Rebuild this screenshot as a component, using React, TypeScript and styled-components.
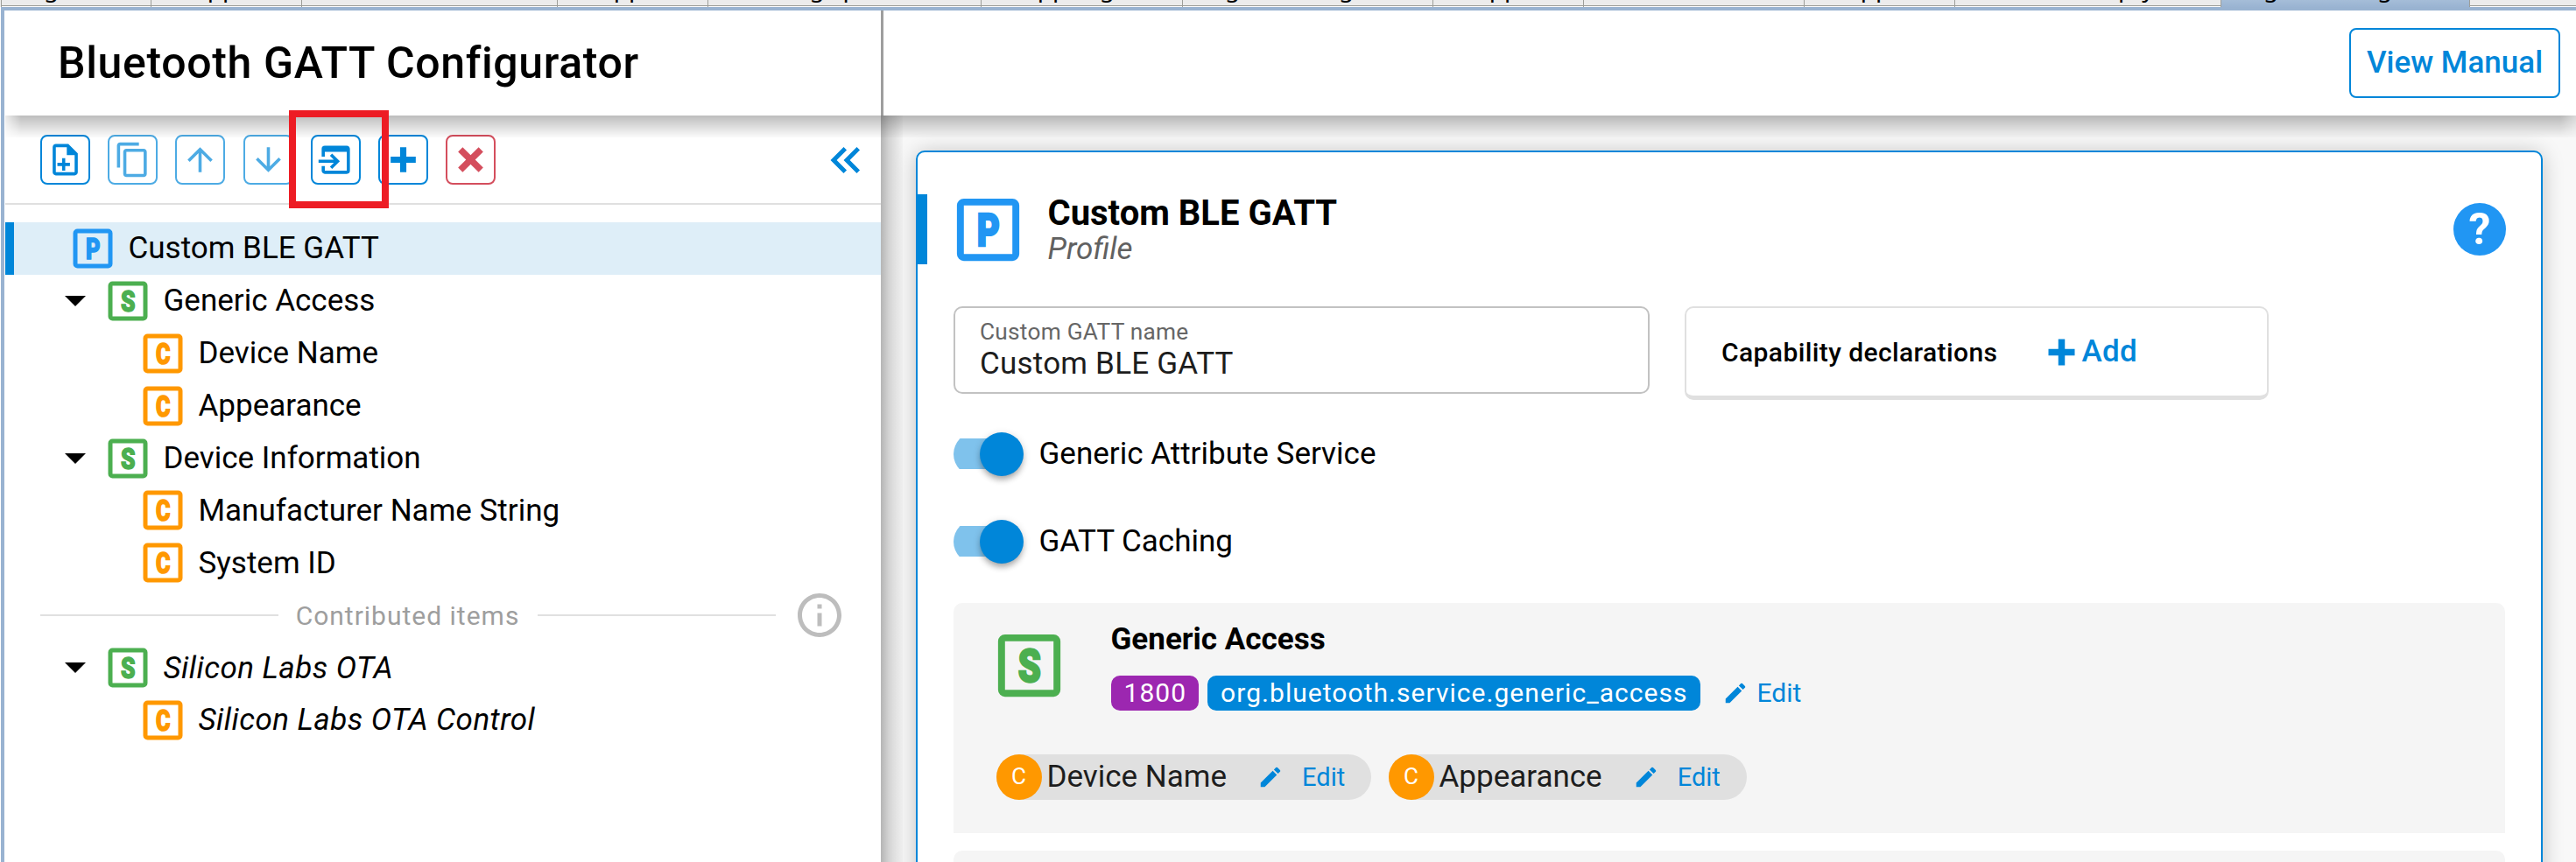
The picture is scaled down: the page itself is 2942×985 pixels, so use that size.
import React from "react";
import styled, { createGlobalStyle } from "styled-components";
import { MdContentCopy, MdArrowUpward, MdArrowDownward, MdEdit, MdInfoOutline } from "react-icons/md";

const BLUE = "#0086d9";

const GlobalStyle = createGlobalStyle`
  *, *::before, *::after { box-sizing: border-box; }
  body { margin: 0; background: #fff; overflow: hidden; }
`;

const Window = styled.div`
  width: 2942px;
  height: 985px;
  overflow: hidden;
  display: flex;
  flex-direction: column;
  background: #fff;
  color: #000;
  font: 400 35px/61px Roboto, "Liberation Sans", sans-serif;
`;

/* Editor tabs above the page */
const TabStrip = styled.div`
  display: flex;
  flex: none;
  height: 8px;
  padding-left: 1px;
  background: #ececec;
`;

const Tab = styled.div<{ $width: number; $active?: boolean }>`
  flex: none;
  width: ${(p) => p.$width}px;
  height: 8px;
  overflow: hidden;
  padding-left: 48px;
  border-left: 1px solid #9d9e99;
  background: ${(p) =>
    p.$active
      ? "linear-gradient(#a5bdd8, #9ab4d2)"
      : "linear-gradient(#ececec 6px, #9d9e99 6px, #9d9e99 7px, #fbfbfb 7px)"};
`;

const TabLabel = styled.div`
  margin-top: -25.5px;
  font: 28px/20px "Noto Sans", sans-serif;
  white-space: nowrap;
`;

const Frame = styled.div`
  flex: 1;
  min-height: 0;
  display: flex;
  flex-direction: column;
  border-top: 4px solid #99b3d1;
  border-left: 4px solid #99b3d1;
  margin-left: 1px;
  padding-left: 1px;
`;

const Header = styled.header`
  flex: none;
  height: 120px;
  display: flex;
`;

const HeaderTitle = styled.h1`
  width: 1003px;
  margin: 0;
  padding-left: 60px;
  border-right: 3px solid #9e9e9e;
  font-size: 50px;
  font-weight: 500;
  line-height: 120px;
  letter-spacing: 0.64px;
`;

const HeaderActions = styled.div`
  flex: 1;
  display: flex;
  justify-content: flex-end;
  align-items: center;
  padding-right: 18px;
`;

const ManualButton = styled.button`
  width: 241px;
  height: 80px;
  padding: 0;
  border: 2px solid ${BLUE};
  border-radius: 8px;
  background: #fff;
  color: ${BLUE};
  font: 500 35px/76px Roboto, sans-serif;
`;

const Main = styled.div`
  position: relative;
  flex: 1;
  min-height: 0;
  display: flex;
`;

const HeaderShade = styled.div`
  position: absolute;
  top: 0;
  left: 0;
  right: 0;
  height: 25px;
  pointer-events: none;
  background: linear-gradient(rgba(0, 0, 0, 0.26), rgba(0, 0, 0, 0.16) 10px, rgba(0, 0, 0, 0.07) 19px, rgba(0, 0, 0, 0.02));
  mask-image: linear-gradient(90deg, rgba(0, 0, 0, 0.3), #000 18px, #000 calc(100% - 18px), rgba(0, 0, 0, 0.5));
`;

const Sidebar = styled.aside`
  flex: none;
  width: 1000px;
  display: flex;
  flex-direction: column;
`;

const Toolbar = styled.div`
  position: relative;
  height: 102px;
  padding: 22px 10px 0 40px;
  display: flex;
  gap: 20.2px;
  border-bottom: 2px solid #e0e0e0;
`;

const ToolButton = styled.button<{ $color?: string }>`
  flex: none;
  width: 57px;
  height: 57px;
  padding: 0;
  display: flex;
  align-items: center;
  justify-content: center;
  border: 2px solid currentColor;
  border-radius: 8px;
  background: transparent;
  color: ${(p) => p.$color ?? BLUE};
  svg { flex: none; }
`;

const CollapseButton = styled(ToolButton)`
  width: 60px;
  margin-left: auto;
  border: 0;
`;

const Marker = styled.div`
  position: absolute;
  left: 324px;
  top: -6px;
  width: 114px;
  height: 112px;
  border: 8px solid #ed1c24;
  z-index: 2;
`;

const Tree = styled.div`
  padding-top: 20px;
  display: flex;
  flex-direction: column;
`;

const TreeRow = styled.div<{ $level: number; $selected?: boolean; $italic?: boolean }>`
  height: 59.9px;
  display: flex;
  align-items: center;
  gap: 10.5px;
  padding-left: ${(p) => [60, 68, 150][p.$level]}px;
  border-left: ${(p) => (p.$selected ? `10px solid ${BLUE}` : "0")};
  background: ${(p) => (p.$selected ? "#deeef8" : "none")};
  font-style: ${(p) => (p.$italic ? "italic" : "normal")};
  letter-spacing: ${(p) => (p.$italic ? "0.45px" : "0")};
  white-space: nowrap;
  svg { flex: none; }
`;

const Caret = styled.span`
  width: 0;
  height: 0;
  margin-right: 7.5px;
  border: 12px solid transparent;
  border-top-color: #000;
  border-bottom: 0;
`;

const SectionRow = styled.div`
  height: 59.9px;
  display: flex;
  align-items: center;
  padding: 0 40px;
  color: #9e9e9e;
  font-size: 30px;
  letter-spacing: 1px;
  white-space: nowrap;
  svg { flex: none; margin-left: 20px; }
`;

const Rule = styled.span`
  flex: 1;
  height: 2px;
  background: #e0e0e0;
`;

const SectionLabel = styled.span`
  padding: 0 21px 0 20px;
`;

const Pane = styled.main`
  position: relative;
  flex: 1;
  min-width: 0;
  padding: 40px 38px 0 40px;
  background: #f8f8f8;
  overflow: hidden;
`;

const PaneShade = styled.div`
  position: absolute;
  top: 0;
  left: 0;
  bottom: 0;
  width: 25px;
  background: linear-gradient(90deg, rgba(0, 0, 0, 0.27), rgba(0, 0, 0, 0.15) 9px, rgba(0, 0, 0, 0.02));
`;

const Card = styled.section`
  position: relative;
  height: 900px;
  padding-top: 48px;
  border: 2px solid ${BLUE};
  border-radius: 10px;
  background: #fff;
  box-shadow: 0 2px 24px rgba(0, 0, 0, 0.22);
`;

const CardHeader = styled.div`
  height: 80px;
  display: flex;
  align-items: center;
  padding-right: 40px;
  border-left: 11px solid ${BLUE};
  svg { flex: none; }
`;

const CardHeading = styled.div`
  flex: 1;
  height: 80px;
  margin-left: 21px;
`;

const CardTitle = styled.h2`
  margin: 0;
  font-size: 40px;
  font-weight: 700;
  line-height: 43px;
`;

const CardSubtitle = styled.div`
  font-size: 35px;
  font-style: italic;
  line-height: 40px;
  color: #616161;
`;

const HelpButton = styled.button`
  width: 60px;
  height: 60px;
  padding: 0;
  border: 0;
  border-radius: 50%;
  background: #2196f3;
  color: #fff;
  font: 700 50px/60px Roboto, sans-serif;
`;

const CardBody = styled.div`
  padding: 48px 41px 0;
`;

const FieldRow = styled.div`
  display: flex;
  align-items: flex-start;
  gap: 40px;
  height: 107px;
`;

const Field = styled.label`
  width: 795px;
  height: 100px;
  padding: 10px 28px;
  border: 2px solid #c2c2c2;
  border-radius: 10px;
`;

const FieldLabel = styled.div`
  font-size: 26.25px;
  line-height: 34px;
  letter-spacing: 0.25px;
  color: #666;
`;

const FieldValue = styled.div`
  line-height: 40px;
  letter-spacing: 0.22px;
  color: #1d1d1d;
`;

const Capabilities = styled.div`
  width: 667px;
  height: 107px;
  display: flex;
  align-items: center;
  padding: 0 0 0 40px;
  border: 2px solid #e0e0e0;
  border-bottom-width: 5px;
  border-radius: 10px;
  font-size: 30px;
  font-weight: 500;
  letter-spacing: 0.4px;
`;

const AddButton = styled.button`
  display: flex;
  align-items: center;
  margin-left: 51px;
  padding: 0;
  border: 0;
  background: none;
  color: ${BLUE};
  font: 500 35px/50px Roboto, sans-serif;
  letter-spacing: 0.3px;
`;

const Toggles = styled.div`
  display: flex;
  flex-direction: column;
  gap: 50px;
  padding: 37px 0 45px;
`;

const ToggleRow = styled.div`
  height: 50px;
  display: flex;
  align-items: center;
  gap: 17.5px;
  line-height: 48px;
`;

const Track = styled.span`
  width: 80px;
  height: 50px;
  display: flex;
  justify-content: flex-end;
  background: linear-gradient(#7fc2ec, #7fc2ec) 0 7px / 70px 35px no-repeat;
  border-radius: 25px;
`;

const Thumb = styled.span`
  width: 50px;
  height: 50px;
  border-radius: 50%;
  background: ${BLUE};
  box-shadow: 0 6px 7px -2px rgba(0, 0, 0, 0.25), 0 2px 8px rgba(0, 0, 0, 0.18);
`;

const Service = styled.section`
  height: 263px;
  margin-bottom: 20px;
  padding: 20px 0 0 38.5px;
  border-radius: 10px 10px 0 0;
  background: #f5f5f5;
`;

const ServiceHead = styled.div`
  display: flex;
  gap: 46px;
  height: 153px;
  > svg { margin-top: 4px; }
`;

const ServiceTitle = styled.h3`
  margin: 0 0 20px;
  font-size: 35px;
  font-weight: 700;
  line-height: 43px;
`;

const BadgeRow = styled.div`
  display: flex;
  align-items: center;
  gap: 10px;
`;

const Badge = styled.span<{ $color: string }>`
  height: 40px;
  padding: 0 14px 0 15px;
  border-radius: 10px;
  background: ${(p) => p.$color};
  color: #fff;
  font-size: 30px;
  line-height: 40px;
  letter-spacing: 1.04px;
`;

const EditLink = styled.button<{ $gap: number; $offset: number; $size: number }>`
  display: flex;
  align-items: center;
  gap: ${(p) => p.$gap}px;
  margin: 0 0 0 ${(p) => p.$offset}px;
  padding: 0;
  border: 0;
  background: none;
  color: ${BLUE};
  font: 400 ${(p) => p.$size}px/38px Roboto, sans-serif;
`;

const ChipRow = styled.div`
  display: flex;
  gap: 20px;
  margin-left: 10px;
`;

const Chip = styled.div<{ $width: number }>`
  width: ${(p) => p.$width}px;
  height: 52px;
  display: flex;
  align-items: center;
  border-radius: 26px;
  background: #e0e0e0;
  color: #1d1d1d;
  line-height: 52px;
  white-space: nowrap;
`;

const Avatar = styled.span`
  width: 52px;
  height: 52px;
  margin-right: 6px;
  border-radius: 50%;
  background: #ff9800;
  color: #fff;
  font-size: 26px;
  line-height: 50px;
  text-align: center;
`;

const letterColors = { P: "#2196f3", S: "#4caf50", C: "#ff9800" };

function LetterBox({ letter, size }: { letter: "P" | "S" | "C"; size: number }) {
  const color = letterColors[letter];
  return (
    <svg width={size} height={size} viewBox="0 0 24 24">
      <rect x="4" y="4" width="16" height="16" rx="1" fill="none" stroke={color} strokeWidth="2" />
      <text
        x="8.8"
        y="16.7"
        fill={color}
        stroke={color}
        strokeWidth="0.6"
        fontFamily="Roboto, sans-serif"
        fontStyle="normal"
        fontWeight="900"
        fontSize="13.3"
        letterSpacing="0"
        textLength="6.6"
        lengthAdjust="spacingAndGlyphs"
      >
        {letter}
      </text>
    </svg>
  );
}

const shapes = {
  filePlus:
    "M14 2H6C4.89 2 4 2.89 4 4V20C4 21.11 4.89 22 6 22H18C19.11 22 20 21.11 20 20V8L14 2M18 20H6V4H13V9H18V20M10 11H12V14H15V16H12V19H10V16H7V14H10Z",
  importApp:
    "M1,12H10.76L8.26,9.5L9.67,8.08L14.59,13L9.67,17.92L8.26,16.5L10.76,14H1V12M19,3C20.11,3 21,3.89 21,5V19A2,2 0 0,1 19,21H5C3.89,21 3,20.1 3,19V16H5V19H19V7H5V10H3V5A2,2 0 0,1 5,3H19Z",
  plus: "M20 14H14V20H10V14H4V10H10V4H14V10H20V14Z",
  close:
    "M20 6.91L17.09 4L12 9.09L6.91 4L4 6.91L9.09 12L4 17.09L6.91 20L12 14.91L17.09 20L20 17.09L14.91 12L20 6.91Z",
  collapse:
    "M18.41,7.41L17,6L11,12L17,18L18.41,16.59L13.83,12L18.41,7.41M12.41,7.41L11,6L5,12L11,18L12.41,16.59L7.83,12L12.41,7.41Z",
};

function Shape({ name, size = 43 }: { name: keyof typeof shapes; size?: number }) {
  return (
    <svg width={size} height={size} viewBox="0 0 24 24" fill="currentColor">
      <path d={shapes[name]} />
    </svg>
  );
}

const tabs: [string, number][] = [
  ["gatt_db.c", 171],
  ["app.c", 172],
  ["autostart_init.c", 292],
  ["app.c", 172],
  ["debug sprintf.c", 312],
  ["app_log.c", 230],
  ["gatt_config.bt", 286],
  ["app.c", 172],
  ["bt_stack.c", 252],
  ["app.c", 172],
  ["bt_soc_empty", 304],
  ["gatt_config.bt", 284],
  ["", 130],
];

const faded = "#4dabe4";

export default function App() {
  return (
    <Window>
      <GlobalStyle />
      <TabStrip>
        {tabs.map(([label, width], i) => (
          <Tab key={i} $width={width} $active={i === 11}>
            <TabLabel>{label}</TabLabel>
          </Tab>
        ))}
      </TabStrip>
      <Frame>
        <Header>
          <HeaderTitle>Bluetooth GATT Configurator</HeaderTitle>
          <HeaderActions>
            <ManualButton>View Manual</ManualButton>
          </HeaderActions>
        </Header>
        <Main>
          <Sidebar>
            <Toolbar>
              <ToolButton><Shape name="filePlus" /></ToolButton>
              <ToolButton $color={faded}><MdContentCopy size={43} /></ToolButton>
              <ToolButton $color={faded}><MdArrowUpward size={43} /></ToolButton>
              <ToolButton $color={faded}><MdArrowDownward size={43} /></ToolButton>
              <ToolButton><Shape name="importApp" /></ToolButton>
              <ToolButton><Shape name="plus" /></ToolButton>
              <ToolButton $color="#d44e5d"><Shape name="close" /></ToolButton>
              <CollapseButton><Shape name="collapse" size={60} /></CollapseButton>
              <Marker />
            </Toolbar>
            <Tree>
              <TreeRow $level={0} $selected><LetterBox letter="P" size={60} />Custom BLE GATT</TreeRow>
              <TreeRow $level={1}><Caret /><LetterBox letter="S" size={60} />Generic Access</TreeRow>
              <TreeRow $level={2}><LetterBox letter="C" size={60} />Device Name</TreeRow>
              <TreeRow $level={2}><LetterBox letter="C" size={60} />Appearance</TreeRow>
              <TreeRow $level={1}><Caret /><LetterBox letter="S" size={60} />Device Information</TreeRow>
              <TreeRow $level={2}><LetterBox letter="C" size={60} />Manufacturer Name String</TreeRow>
              <TreeRow $level={2}><LetterBox letter="C" size={60} />System ID</TreeRow>
              <SectionRow>
                <Rule />
                <SectionLabel>Contributed items</SectionLabel>
                <Rule />
                <MdInfoOutline size={60} color="#bdbdbd" />
              </SectionRow>
              <TreeRow $level={1} $italic><Caret /><LetterBox letter="S" size={60} />Silicon Labs OTA</TreeRow>
              <TreeRow $level={2} $italic><LetterBox letter="C" size={60} />Silicon Labs OTA Control</TreeRow>
            </Tree>
          </Sidebar>
          <Pane>
            <PaneShade />
            <Card>
              <CardHeader>
                <LetterBoxSlot><LetterBox letter="P" size={95} /></LetterBoxSlot>
                <CardHeading>
                  <CardTitle>Custom BLE GATT</CardTitle>
                  <CardSubtitle>Profile</CardSubtitle>
                </CardHeading>
                <HelpButton>?</HelpButton>
              </CardHeader>
              <CardBody>
                <FieldRow>
                  <Field>
                    <FieldLabel>Custom GATT name</FieldLabel>
                    <FieldValue>Custom BLE GATT</FieldValue>
                  </Field>
                  <Capabilities>
                    Capability declarations
                    <AddButton><Shape name="plus" size={45} />Add</AddButton>
                  </Capabilities>
                </FieldRow>
                <Toggles>
                  <ToggleRow><Track><Thumb /></Track>Generic Attribute Service</ToggleRow>
                  <ToggleRow><Track><Thumb /></Track>GATT Caching</ToggleRow>
                </Toggles>
                <Service>
                  <ServiceHead>
                    <LetterBox letter="S" size={95} />
                    <div>
                      <ServiceTitle>Generic Access</ServiceTitle>
                      <BadgeRow>
                        <Badge $color="#9c27b0">1800</Badge>
                        <Badge $color={BLUE}>org.bluetooth.service.generic_access</Badge>
                        <EditLink $gap={10} $offset={15} $size={30}><MdEdit size={30} />Edit</EditLink>
                      </BadgeRow>
                    </div>
                  </ServiceHead>
                  <ChipRow>
                    <Chip $width={428}>
                      <Avatar>C</Avatar>Device Name
                      <EditLink $gap={21} $offset={35} $size={29}><MdEdit size={30} />Edit</EditLink>
                    </Chip>
                    <Chip $width={409}>
                      <Avatar>C</Avatar>Appearance
                      <EditLink $gap={21} $offset={35} $size={29}><MdEdit size={30} />Edit</EditLink>
                    </Chip>
                  </ChipRow>
                </Service>
                <Service />
              </CardBody>
            </Card>
          </Pane>
          <HeaderShade />
        </Main>
      </Frame>
    </Window>
  );
}

const LetterBoxSlot = styled.span`
  display: flex;
  margin-left: 21.5px;
`;
